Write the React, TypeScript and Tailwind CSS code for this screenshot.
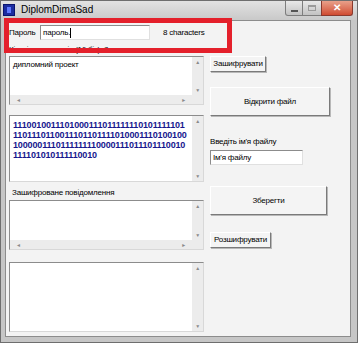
import React from 'react';

const VScroll: React.FC = () => (
  <div className="w-[11px] h-full bg-[#ececec] flex flex-col items-center justify-between py-[2px] text-[5px] leading-[6px] text-[#8a8a8a]">
    <span>▲</span>
    <span>▼</span>
  </div>
);

const HScroll: React.FC = () => (
  <div className="h-[9px] w-full bg-[#ececec] flex items-center justify-between px-[6px] text-[5px] leading-[6px] text-[#8a8a8a]">
    <span>◄</span>
    <span>►</span>
  </div>
);

interface MemoProps {
  height: string;
  hScroll?: boolean;
  children?: React.ReactNode;
}

const Memo: React.FC<MemoProps> = ({ height, hScroll, children }) => (
  <div
    className={`${height} w-[195px] bg-white border border-t-[#8c8c8c] border-l-[#8c8c8c] border-r-[#d8d8d8] border-b-[#d8d8d8] flex flex-col`}
  >
    <div className="flex-1 flex min-h-0">
      <div className="flex-1 px-[3px] pt-[2px] overflow-hidden">{children}</div>
      <VScroll />
    </div>
    {hScroll && (
      <div className="flex">
        <HScroll />
        <div className="w-[11px] h-[9px] bg-[#ececec] shrink-0" />
      </div>
    )}
  </div>
);

const Button: React.FC<{ className: string; label: string }> = ({ className, label }) => (
  <div
    className={`${className} bg-[#f4f4f4] border border-t-white border-l-white border-r-[#7a7a7a] border-b-[#7a7a7a] shadow-[1px_1px_0_#b8b8b8] flex items-center justify-center text-black whitespace-nowrap`}
  >
    {label}
  </div>
);

const binary = [
  '1110010011101000111011111110101111101',
  '1101110110011101101111010001110100100',
  '1000001110111111110000111011101110010',
  '111101010111110010',
];

export default function App() {
  return (
    <div className="w-[358px] h-[343px] bg-[#c6c6c6] border border-[#6e6e6e] flex flex-col relative font-['Liberation_Sans',sans-serif] overflow-hidden">
      {/* Title bar */}
      <div className="h-[19px] flex items-start bg-gradient-to-b from-[#e2e2e2] to-[#c9c9c9]">
        <div className="mt-[3px] ml-[2px] w-[12px] h-[12px] bg-[#1c2ca0] border border-[#0a1470] flex items-center justify-center">
          <div className="w-[4px] h-[6px] bg-[#5f78ff]" />
        </div>
        <span className="ml-[6px] mt-[3px] text-[10px] leading-[12px] text-black">DiplomDimaSad</span>
        <div className="ml-auto mr-[4px] flex">
          <div className="w-[18px] h-[15px] border border-[#7d7d7d] border-t-0 rounded-bl-[3px] bg-gradient-to-b from-[#e9e9e9] to-[#c2c2c2] flex items-end justify-center pb-[3px]">
            <div className="w-[7px] h-[2px] bg-white border border-[#555]" />
          </div>
          <div className="w-[18px] h-[15px] border-b border-[#7d7d7d] bg-gradient-to-b from-[#e9e9e9] to-[#c2c2c2] flex items-center justify-center">
            <div className="w-[8px] h-[6px] border border-[#9a9a9a] border-t-2" />
          </div>
          <div className="w-[32px] h-[15px] border border-[#8a3a2e] border-t-0 rounded-br-[3px] bg-gradient-to-b from-[#e8a08a] to-[#cf4a30] flex items-center justify-center text-white text-[10px] font-bold leading-none">
            ✕
          </div>
        </div>
      </div>

      {/* Client area */}
      <div className="flex-1 ml-[4px] mr-[6px] mb-[5px] bg-[#f3f3f3] border border-[#8c8c8c] pl-[3px] text-[8px] tracking-[-0.2px] text-black">
        {/* Password row */}
        <div className="mt-[4px] h-[15px] flex items-center">
          <span className="w-[31px]">Пароль</span>
          <div className="w-[110px] h-[15px] bg-white border border-t-[#8c8c8c] border-l-[#8c8c8c] border-r-[#e0e0e0] border-b-[#e0e0e0] flex items-center px-[2px]">
            <span>пароль.</span>
            <span className="w-px h-[10px] bg-black" />
          </div>
          <span className="ml-[13px]">8 characters</span>
        </div>

        {/* label mostly hidden by the highlight */}
        <div className="h-[11px] leading-[11px] mt-[4px]">Кількість символів (16 біт): 8</div>

        <div className="mt-[1px] flex">
          {/* Left column */}
          <div className="flex flex-col">
            <Memo height="h-[49px]" hScroll>
              <span className="leading-[11px]">дипломний проект</span>
            </Memo>
            <div className="mt-[10px]">
              <Memo height="h-[67px]">
                <div className="pt-[2px] text-[9px] leading-[10px] font-bold text-[#16168e] tracking-[-0.15px]">
                  {binary.map((line) => (
                    <div key={line}>{line}</div>
                  ))}
                </div>
              </Memo>
            </div>
            <div className="h-[18px] pt-[5px] pl-[3px] leading-[11px]">Зашифроване повідомлення</div>
            <Memo height="h-[50px]" hScroll />
            <div className="mt-[12px]">
              <Memo height="h-[70px]" />
            </div>
          </div>

          {/* Right column */}
          <div className="ml-[6px] flex flex-col items-start">
            <Button className="w-[56px] h-[16px]" label="Зашифрувати" />
            <Button className="mt-[15px] w-[120px] h-[29px]" label="Відкрити файл" />
            <div className="mt-[21px] h-[10px] leading-[10px]">Введіть ім'я файлу</div>
            <div className="mt-[3px] w-[93px] h-[15px] bg-white border border-t-[#8c8c8c] border-l-[#8c8c8c] border-r-[#e0e0e0] border-b-[#e0e0e0] flex items-center px-[2px]">
              Ім'я файлу
            </div>
            <Button className="mt-[21px] w-[117px] h-[29px]" label="Зберегти" />
            <Button className="mt-[17px] w-[61px] h-[16px]" label="Розшифрувати" />
          </div>
        </div>
      </div>

      {/* Red highlight annotation */}
      <div className="absolute left-[3px] top-[17px] w-[228px] h-[35px] border-[5px] border-[#e4202b]" />
    </div>
  );
}
